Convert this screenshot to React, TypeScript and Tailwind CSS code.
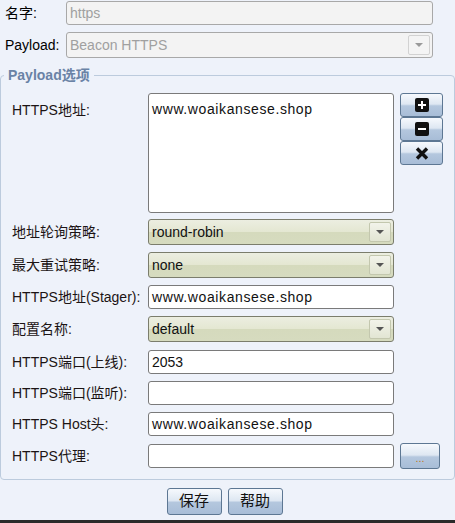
import React from "react";

const font = { fontFamily: '"Liberation Sans", "Noto Sans CJK SC", sans-serif' };

const btn =
  "shrink-0 border border-[#5d7793] rounded-[3px] bg-[linear-gradient(to_bottom,#f6f9fd_0%,#dee7f2_46%,#b4c7de_54%,#a8bdd7_100%)] flex items-center justify-center";

function Arrow({ disabled }: { disabled?: boolean }) {
  return (
    <div
      className={
        disabled
          ? "w-[22px] h-[20px] mr-[2px] border border-[#d2d2d2] rounded-[2px] bg-[#f4f4f4] flex items-center justify-center"
          : "w-[22px] h-[20px] mr-[2px] border border-[#c3c7ae] rounded-[2px] bg-[linear-gradient(to_bottom,#f2f3ea,#e2e5d3)] flex items-center justify-center"
      }
    >
      <svg width="8" height="4" viewBox="0 0 8 4">
        <path d="M0 0h8L4 4z" fill={disabled ? "#9a9a9a" : "#555"} />
      </svg>
    </div>
  );
}

function Select({ value }: { value: string }) {
  return (
    <div className="shrink-0 w-[246px] h-[26px] border border-[#7b7d6c] rounded-[3px] bg-[linear-gradient(to_bottom,#eceee1_0%,#e4e7d2_48%,#d5dabd_52%,#d6dbbf_100%)] flex items-center justify-between">
      <span className="pl-[3px] text-[14px] text-[#111]">{value}</span>
      <Arrow />
    </div>
  );
}

function Input({ value, wide }: { value?: string; wide?: boolean }) {
  return (
    <div className="shrink-0 w-[246px] h-[24px] border border-[#7a7a7a] rounded-[3px] bg-white flex items-center">
      <span className={"pl-[3px] text-[14px] text-[#111] " + (wide ? "tracking-[0.6px]" : "")}>
        {value}
      </span>
    </div>
  );
}

function Row({
  label,
  children,
  className,
}: {
  label: string;
  children: React.ReactNode;
  className?: string;
}) {
  return (
    <div className={"flex items-center " + (className ?? "")}>
      <div className="shrink-0 w-[147px] pl-[11px] whitespace-nowrap text-[14px] text-[#1c1414]">
        {label}
      </div>
      {children}
    </div>
  );
}

export default function App() {
  return (
    <div style={font} className="w-[455px] h-[523px] bg-[#eef2fa] flex flex-col overflow-hidden">
      <div className="flex items-center mt-[1px] h-[24px]">
        <div className="w-[66px] pl-[5px] text-[14px] text-black">名字:</div>
        <div className="w-[367px] h-[24px] border border-[#a8a8a8] rounded-[3px] bg-[#f3f3f3] flex items-center">
          <span className="pl-[3px] text-[14px] text-[#a0a0a0]">https</span>
        </div>
      </div>
      <div className="flex items-center mt-[7px] h-[26px]">
        <div className="w-[66px] pl-[5px] text-[14px] text-black">Payload:</div>
        <div className="w-[367px] h-[26px] border border-[#a8a8a8] rounded-[3px] bg-[#f3f3f3] flex items-center justify-between">
          <span className="pl-[3px] text-[14px] text-[#a0a0a0]">Beacon HTTPS</span>
          <Arrow disabled />
        </div>
      </div>

      <fieldset className="shrink-0 mt-[9px] border border-[#bccbdd] rounded-[4px] w-[455px] h-[413px]">
        <legend className="ml-[3px] px-[4px] text-[14px] font-bold text-[#6a83a6] leading-[16px]">
          Payload选项
        </legend>

        <div className="flex items-start mt-[10px]">
          <div className="shrink-0 w-[147px] pl-[11px] pt-[7px] text-[14px] text-[#1c1414]">
            HTTPS地址:
          </div>
          <div className="shrink-0 w-[246px] h-[120px] border border-[#7a7a7a] rounded-[3px] bg-white">
            <div className="pl-[3px] pt-[5px] text-[14px] text-[#111] tracking-[0.6px]">
              www.woaikansese.shop
            </div>
          </div>
          <div className="ml-[6px] flex flex-col">
            <div className={btn + " w-[43px] h-[24px]"}>
              <svg width="14" height="14" viewBox="0 0 14 14">
                <rect width="14" height="14" rx="2" fill="#111" />
                <path d="M6 3h2v3h3v2H8v3H6V8H3V6h3z" fill="#fff" />
              </svg>
            </div>
            <div className={btn + " w-[43px] h-[24px]"}>
              <svg width="14" height="14" viewBox="0 0 14 14">
                <rect width="14" height="14" rx="2" fill="#111" />
                <path d="M3 6h8v2H3z" fill="#fff" />
              </svg>
            </div>
            <div className={btn + " w-[43px] h-[24px]"}>
              <svg width="14" height="13" viewBox="0 0 14 13">
                <path d="M2 1.5L12 11.5M12 1.5L2 11.5" stroke="#111" strokeWidth="3.4" />
              </svg>
            </div>
          </div>
        </div>

        <Row label="地址轮询策略:" className="mt-[6px]">
          <Select value="round-robin" />
        </Row>
        <Row label="最大重试策略:" className="mt-[7px]">
          <Select value="none" />
        </Row>
        <Row label="HTTPS地址(Stager):" className="mt-[7px]">
          <Input value="www.woaikansese.shop" wide />
        </Row>
        <Row label="配置名称:" className="mt-[7px]">
          <Select value="default" />
        </Row>
        <Row label="HTTPS端口(上线):" className="mt-[8px]">
          <Input value="2053" />
        </Row>
        <Row label="HTTPS端口(监听):" className="mt-[7px]">
          <Input />
        </Row>
        <Row label="HTTPS Host头:" className="mt-[7px]">
          <Input value="www.woaikansese.shop" wide />
        </Row>
        <Row label="HTTPS代理:" className="mt-[7px]">
          <Input />
          <div className={btn + " ml-[6px] w-[40px] h-[26px]"}>
            <span className="text-[11px] text-[#c07a1a] leading-none pt-[4px]">...</span>
          </div>
        </Row>
      </fieldset>

      <div className="flex justify-center gap-[6px] mt-[8px] pr-[6px]">
        <div className={btn + " w-[55px] h-[27px]"}>
          <span className="text-[15px] text-[#111]">保存</span>
        </div>
        <div className={btn + " w-[55px] h-[27px]"}>
          <span className="text-[15px] text-[#111]">帮助</span>
        </div>
      </div>
      <div className="mt-auto h-[3px] bg-[#2a2a2a]" />
    </div>
  );
}
